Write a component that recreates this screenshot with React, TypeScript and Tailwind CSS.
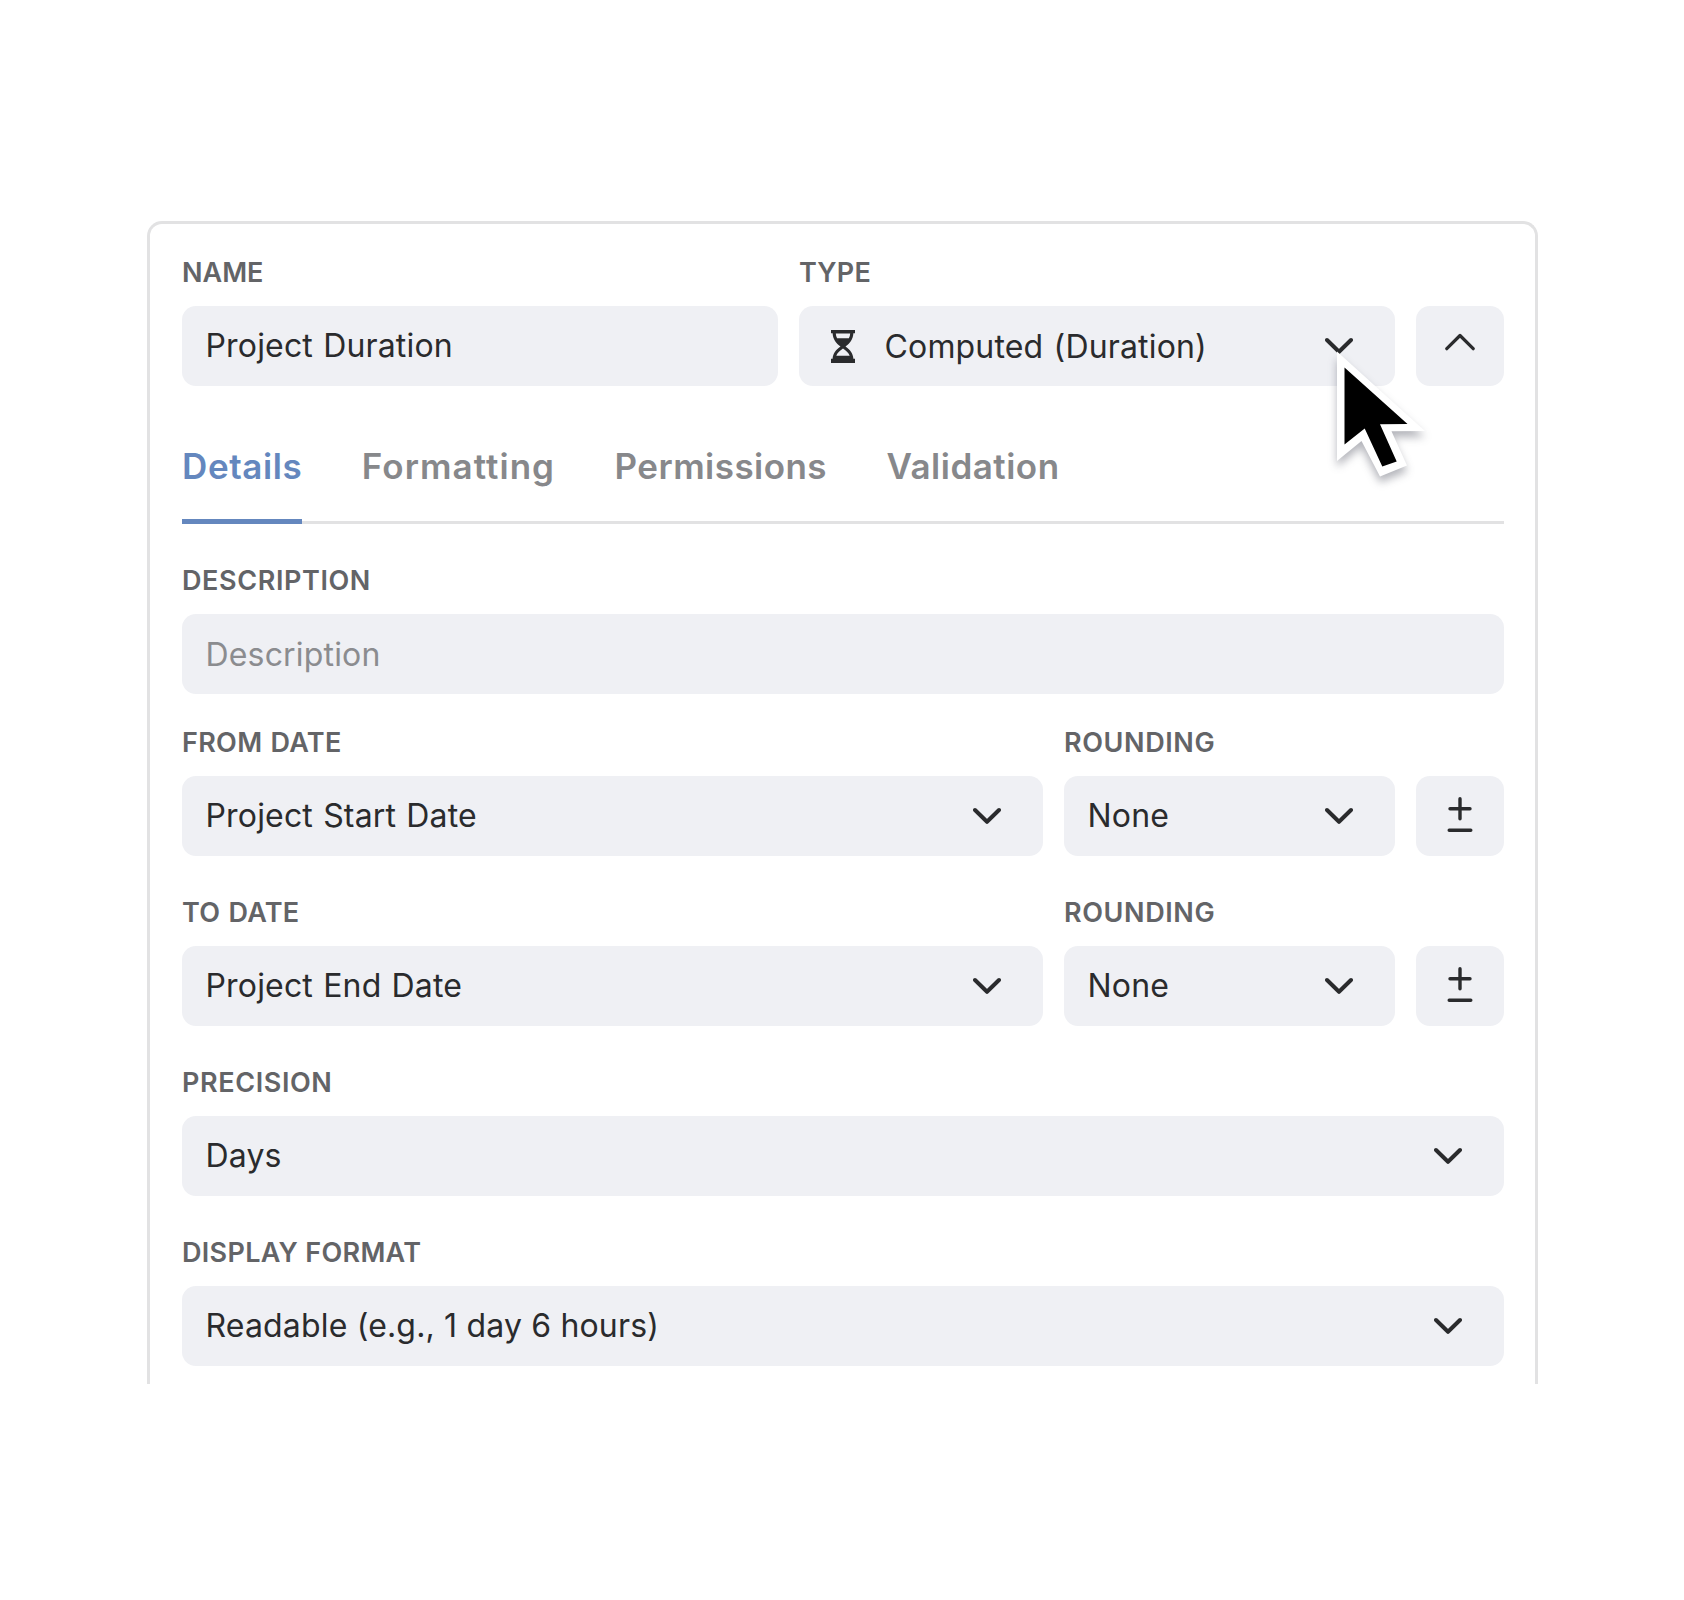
// Field editor card: name/type header, tabs and the duration settings form
import type { ReactNode } from 'react';

const tabs = [
  { name: 'Details', tracking: 'tracking-[0.6px]' },
  { name: 'Formatting', tracking: 'tracking-[1.05px]' },
  { name: 'Permissions', tracking: 'tracking-[0.45px]' },
  { name: 'Validation', tracking: 'tracking-[0.5px]' },
];

const dateRows = [
  { label: 'From Date', value: 'Project Start Date' },
  { label: 'To Date', value: 'Project End Date' },
];

function ChevronDown() {
  return (
    <svg viewBox="0 0 28 18" fill="none" stroke="currentColor" strokeWidth="4" strokeLinecap="round" strokeLinejoin="round" className="w-7 h-[18px] shrink-0">
      <path d="M2 3l12 11.8L26 3" />
    </svg>
  );
}

function ChevronUp() {
  return (
    <svg viewBox="0 0 30 18" fill="none" stroke="currentColor" strokeWidth="3.2" strokeLinecap="round" strokeLinejoin="round" className="w-[30px] h-[18px] mb-2">
      <path d="M1.8 15.7L15 2.5l13.2 13.2" />
    </svg>
  );
}

function PlusMinus() {
  return (
    <svg viewBox="0 0 26 36" fill="none" stroke="currentColor" strokeWidth="3.4" strokeLinecap="round" className="w-[26px] h-9 mb-1">
      <path d="M13 2.7v20M3 12.7h20M2.2 34.2h21.6" />
    </svg>
  );
}

function Hourglass() {
  return (
    <svg viewBox="0 0 24 33" className="w-6 h-[33px] shrink-0">
      <path d="M0 0h24v3.2h-1.6c-.4 6-3.400 10-7.900 13.300 4.500 3.300 7.500 6.500 7.900 12.300H24V33H0v-4.200h1.600c.4-5.800 3.400-9 7.900-12.300C5 13.200 2 9.200 1.600 3.200H0z" fill="currentColor" />
      <path d="M4.800 3.400h14.400c-.1 1.800-.5 3.400-1.300 4.800H6.100c-.8-1.400-1.200-3-1.300-4.800zM12 18.400c3.300 2.200 5.800 4.500 6.700 7.400H5.300c.9-2.900 3.400-5.200 6.700-7.400z" fill="#eff0f4" />
    </svg>
  );
}

function Cursor() {
  return (
    <svg viewBox="0 0 100 140" className="absolute left-[528px] top-[36px] w-[100px] h-[140px] z-10 drop-shadow-[0_6px_4px_rgba(40,42,60,0.35)]">
      <polygon points="10,9.5 10,119 34.5,99 53,134.5 80,123.5 64.5,89.3 98,89" fill="#fff" />
      <polygon points="17.5,25.5 17.5,102.5 37.7,86.5 55.3,124.5 69.7,119.5 53,82.2 80.5,82" fill="#000" />
    </svg>
  );
}

interface FieldProps {
  label: string;
  tracking?: string;
  className?: string;
  children: ReactNode;
}

function Field({ label, tracking = 'tracking-[0.6px]', className = '', children }: FieldProps) {
  return (
    <div className={`flex flex-col gap-4 ${className}`}>
      <div className={`h-9 leading-[38px] text-[27px] font-semibold uppercase text-[#636467] ${tracking}`}>{label}</div>
      {children}
    </div>
  );
}

function Select({ value, icon, children }: { value: string; icon?: ReactNode; children?: ReactNode }) {
  return (
    <div className="relative flex h-20 items-center justify-between rounded-[14px] bg-[#eff0f4] pl-[23.5px] pr-[42px]">
      <div className="flex items-center">
        {icon && <span className="ml-2 mr-[30px]">{icon}</span>}
        <span className={icon ? 'pt-0.5' : ''}>{value}</span>
      </div>
      <ChevronDown />
      {children}
    </div>
  );
}

function SquareButton({ children }: { children: ReactNode }) {
  return (
    <button className="flex h-20 w-[87.5px] shrink-0 items-center justify-center self-end rounded-[14px] bg-[#eff0f4]">
      {children}
    </button>
  );
}

export default function App() {
  return (
    <div className="h-[1600px] w-[1684px] bg-white pl-[147px] pt-[221px] font-['Inter',sans-serif] text-[32px] text-[#2a2b2d]">
      <div className="h-[1163px] w-[1391px] rounded-t-[15px] border-[3px] border-b-0 border-[#e2e2e3] pl-8 pr-[31.5px] pt-[30px] tracking-[0.17px] [word-spacing:1px]">
        <div className="flex gap-[21px]">
          <Field label="Name" tracking="tracking-[0px]" className="w-[596px]">
            <div className="flex h-20 items-center rounded-[14px] bg-[#eff0f4] px-[23.5px]">Project Duration</div>
          </Field>
          <Field label="Type" tracking="tracking-[0.2px]" className="w-[596px]">
            <Select value="Computed (Duration)" icon={<Hourglass />}>
              <Cursor />
            </Select>
          </Field>
          <SquareButton>
            <ChevronUp />
          </SquareButton>
        </div>

        <div className="mt-[52px] flex h-[86px] gap-[59.5px] text-[35px] font-semibold text-[#87888b] shadow-[inset_0_-3px_0_#e2e2e3]">
          {tabs.map((tab, i) => (
            <div
              key={tab.name}
              className={`h-[86px] leading-[56px] ${tab.tracking} ${i === 0 ? 'border-b-[5px] border-[#6487be] text-[#6487be]' : ''}`}
            >
              {tab.name}
            </div>
          ))}
        </div>

        <Field label="Description" className="mt-[38px]">
          <div className="flex h-20 items-center rounded-[14px] bg-[#eff0f4] px-[23.5px] pt-0.5 text-[#8b8c8f]">Description</div>
        </Field>

        <div className="mt-[30px] flex flex-col gap-[38px]">
          {dateRows.map((row) => (
            <div key={row.label} className="flex gap-[21px]">
              <Field label={row.label} tracking="tracking-[0.3px]" className="w-[861px]">
                <Select value={row.value} />
              </Field>
              <Field label="Rounding" className="w-[331px]">
                <Select value="None" />
              </Field>
              <SquareButton>
                <PlusMinus />
              </SquareButton>
            </div>
          ))}
          <Field label="Precision">
            <Select value="Days" />
          </Field>
          <Field label="Display Format" tracking="tracking-[0.3px]" className="[word-spacing:0]">
            <Select value="Readable (e.g., 1 day 6 hours)" />
          </Field>
        </div>
      </div>
    </div>
  );
}
